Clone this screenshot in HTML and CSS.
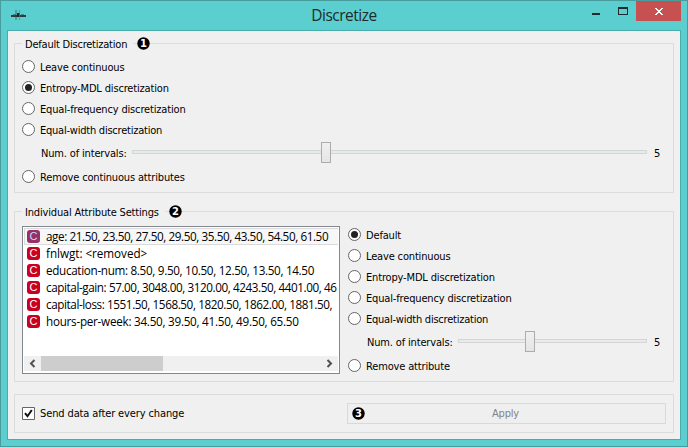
FILE: index.html
```html
<!DOCTYPE html>
<html lang="en">
<head>
<meta charset="utf-8">
<title>Discretize</title>
<link rel="stylesheet" href="styles.css">
</head>
<body>
<div class="window">
  <header class="titlebar">
    <svg class="app-icon" width="16" height="12" viewBox="0 0 16 12" shape-rendering="crispEdges"><path d="M4 1h2v10H4zM8 1h1v10H8z" fill="#42696a" opacity=".5"/><path d="M0 6h15v2H0z" fill="#2f3c3d"/><path d="M2 5h3v1H2zM10 5h3v1h-3z" fill="#42595a" opacity=".6"/><path d="M6 4h2v4H6z" fill="#202526"/><path d="M8 4h1v4H8z" fill="#42696a"/></svg>
    <h1 class="title">Discretize</h1>
    <div class="controls">
      <svg width="48" height="20" viewBox="0 0 48 20" shape-rendering="crispEdges"><path d="M4 12h8v2H4z" fill="#222b2b"/><path d="M30 6h10v8H30z M31 8v5h8V8z" fill="#222b2b" fill-rule="evenodd"/></svg>
      <svg width="45" height="20" viewBox="0 0 45 20" shape-rendering="crispEdges"><path d="M0 0h45v20H0z" fill="#c75050"/><path d="M19 7h2v1h1v1h2V8h1V7h2v1h-1v1h-1v1h-1v1h1v1h1v1h1v1h-2v-1h-1v-1h-2v1h-1v1h-2v-1h1v-1h1v-1h1v-1h-1V9h-1V8h-1z" fill="#fff"/></svg>
    </div>
  </header>
  <main class="client">
    <fieldset class="group group-default">
      <legend><span class="legend-text lt-default">Default Discretization</span><span class="dash"></span><svg class="badge" width="13" height="13" viewBox="0 0 13 13"><circle cx="6.500" cy="6.500" r="6.200"/><text x="6.500" y="10.200">1</text></svg></legend>
      <label class="option"><i class="radio"></i><span>Leave continuous</span></label>
      <label class="option"><i class="radio on"></i><span>Entropy-MDL discretization</span></label>
      <label class="option"><i class="radio"></i><span>Equal-frequency discretization</span></label>
      <label class="option tight"><i class="radio"></i><span>Equal-width discretization</span></label>
      <div class="slider-row"><span class="slider-label">Num. of intervals:</span><div class="track track-active"><i class="handle handle-a"></i></div><span class="value">5</span></div>
      <label class="option"><i class="radio"></i><span>Remove continuous attributes</span></label>
    </fieldset>
    <fieldset class="group group-individual">
      <legend><span class="legend-text lt-individual">Individual Attribute Settings</span><span class="dash"></span><svg class="badge" width="13" height="13" viewBox="0 0 13 13"><circle cx="6.500" cy="6.500" r="6.200"/><text x="6.500" y="10.200">2</text></svg></legend>
      <div class="columns">
        <div class="list">
          <ul class="rows">
            <li class="current dense"><b class="type">C</b><span>age: 21.50, 23.50, 27.50, 29.50, 35.50, 43.50, 54.50, 61.50</span></li>
            <li class="wide"><b class="type">C</b><span>fnlwgt: &lt;removed&gt;</span></li>
            <li class="snug"><b class="type">C</b><span>education-num: 8.50, 9.50, 10.50, 12.50, 13.50, 14.50</span></li>
            <li class="dense"><b class="type">C</b><span>capital-gain: 57.00, 3048.00, 3120.00, 4243.50, 4401.00, 46</span></li>
            <li class="dense"><b class="type">C</b><span>capital-loss: 1551.50, 1568.50, 1820.50, 1862.00, 1881.50,</span></li>
            <li><b class="type">C</b><span>hours-per-week: 34.50, 39.50, 41.50, 49.50, 65.50</span></li>
          </ul>
          <div class="scrollbar">
            <svg width="17" height="15" viewBox="0 0 17 15"><path d="M10.500 4L7 7.500l3.500 3.500" fill="none" stroke="#505050" stroke-width="2"/></svg>
            <div class="thumb"></div>
            <svg width="17" height="15" viewBox="0 0 17 15"><path d="M6.500 4L10 7.500 6.500 11" fill="none" stroke="#505050" stroke-width="2"/></svg>
          </div>
        </div>
        <div class="choices">
          <label class="option"><i class="radio on"></i><span>Default</span></label>
          <label class="option"><i class="radio"></i><span>Leave continuous</span></label>
          <label class="option"><i class="radio"></i><span>Entropy-MDL discretization</span></label>
          <label class="option"><i class="radio"></i><span>Equal-frequency discretization</span></label>
          <label class="option tight"><i class="radio"></i><span>Equal-width discretization</span></label>
          <div class="slider-row"><span class="slider-label">Num. of intervals:</span><div class="track"><i class="handle handle-b"></i></div><span class="value">5</span></div>
          <label class="option"><i class="radio"></i><span>Remove attribute</span></label>
        </div>
      </div>
    </fieldset>
    <section class="group group-commit">
      <label class="check"><svg width="13" height="13" viewBox="0 0 13 13"><path d="M.5.5h12v12H.5z" fill="#fff" stroke="#666"/><path d="M3 6.200l2.500 3L9.800 3" fill="none" stroke="#111" stroke-width="2"/></svg><span>Send data after every change</span></label>
      <div class="apply"><svg class="badge" width="13" height="13" viewBox="0 0 13 13"><circle cx="6.500" cy="6.500" r="6.200"/><text x="6.500" y="10.200">3</text></svg><span>Apply</span></div>
    </section>
  </main>
</div>
</body>
</html>
```

FILE: styles.css
```css
* { box-sizing: border-box; }
body {
  margin: 0;
  font-family: "DejaVu Sans Condensed", "DejaVu Sans", sans-serif;
  font-size: 11px;
  font-stretch: condensed;
  letter-spacing: -0.16px;
  color: #000;
}
.window {
  width: 688px;
  height: 447px;
  padding: 0 6px 6px;
  border: 1px solid #489c9c;
  background: #5bcfcf;
}
.titlebar {
  display: flex;
  height: 29px;
  justify-content: space-between;
}
.app-icon { margin: 8px 0 0 4px; }
.title {
  margin: 1px 0 0 73px;
  font: 400 15.5px/27px "Open Sans", sans-serif;
  letter-spacing: -0.5px;
  color: #222b2b;
}
.controls { display: flex; width: 93px; }
.controls svg { flex: none; }
.client {
  height: 410px;
  padding: 4px 6px 0;
  border: 1px solid #4aabab;
  background: #f0f0f0;
}
.group {
  margin: 0;
  min-width: 0;
  border: 1px solid #dcdcdc;
}
.group-default { height: 158px; padding: 4px 7px 0; }
.group-individual { height: 179px; margin-top: 10px; padding: 6px 7px 0; }
legend {
  display: flex;
  align-items: center;
  height: 17px;
  margin-left: 0;
  padding: 0;
}
.legend-text {
  padding: 1px 0 0 3px;
  letter-spacing: -0.22px;
  white-space: nowrap;
}
.lt-default { width: 111px; }
.lt-individual { width: 143px; letter-spacing: -0.17px; }
.dash { width: 4px; height: 1px; background: #dcdcdc; }
.badge text {
  font: 700 10px "DejaVu Sans", sans-serif;
  letter-spacing: 0;
  text-anchor: middle;
  fill: #fff;
}
.option {
  display: flex;
  align-items: center;
  gap: 5px;
  height: 21px;
  white-space: nowrap;
}
.option span { padding-top: 2px; }
.option.tight { letter-spacing: -0.23px; }
.radio {
  display: flex;
  width: 13px;
  height: 13px;
  border: 1px solid #666;
  border-radius: 50%;
  background: #fff;
}
.radio.on::after {
  content: "";
  width: 7px;
  height: 7px;
  margin: 2px;
  border-radius: 50%;
  background: #222;
}
.slider-row {
  display: flex;
  align-items: center;
  height: 26px;
  padding: 0 10px 0 19px;
}
.slider-label { width: 91px; white-space: nowrap; }
.track {
  flex: 1;
  height: 4px;
  margin-top: -2px;
  border: 1px solid #d3d6d6;
  background: #eaeaea;
}
.track-active { background: #e7eaea; }
.handle {
  display: block;
  width: 10px;
  height: 21px;
  margin-top: -9px;
  border: 1px solid #acacac;
  background: linear-gradient(#f0f0f0, #e5e5e5);
}
.handle-a { margin-left: 188px; }
.handle-b { margin-left: 66px; }
.value { width: 9px; margin-left: 7px; margin-right: -7px; }
.columns { display: flex; gap: 8px; }
.list {
  display: flex;
  flex-direction: column;
  width: 318px;
  height: 148px;
  padding: 1px;
  border: 1px solid #828790;
  background: #fff;
}
.rows {
  flex: 1;
  margin: 0;
  padding: 0;
  list-style: none;
  overflow: hidden;
  font: 11.7px/17px "Open Sans", sans-serif;
  letter-spacing: -0.26px;
}
.rows li {
  display: flex;
  align-items: center;
  gap: 6px;
  height: 17px;
  padding-left: 3px;
  white-space: nowrap;
}
.rows li.wide { letter-spacing: -0.04px; }
.rows li.snug { letter-spacing: -0.32px; }
.rows li.dense { letter-spacing: -0.41px; }
.rows li.current {
  padding-left: 2px;
  border: 1px solid #dadada;
  border-right: 0;
  background: #f7f7f7;
}
.type {
  flex: none;
  width: 13px;
  height: 13px;
  border-radius: 3px;
  background: #ca0020;
  color: #fff;
  font: 400 11px/13px "Liberation Sans", sans-serif;
  letter-spacing: 0;
  text-align: center;
}
.current .type { background: #963068; color: #c9dcf2; }
.scrollbar { display: flex; height: 15px; margin-bottom: 1px; background: #f0f0f0; }
.thumb { width: 122px; margin-right: auto; background: #cdcdcd; }
.choices { flex: 1; margin-top: -2px; }
.group-commit {
  display: flex;
  align-items: center;
  justify-content: space-between;
  height: 39px;
  margin-top: 12px;
  padding: 0 7px;
}
.check { display: flex; align-items: center; gap: 5px; letter-spacing: -0.12px; white-space: nowrap; }
.apply {
  display: grid;
  grid-template-columns: 13px 1fr 15px;
  align-items: center;
  width: 319px;
  height: 21px;
  padding: 0 4px;
  border: 1px solid #d9d9d9;
  background: #efefef;
  color: #838383;
  text-align: center;
}
```
